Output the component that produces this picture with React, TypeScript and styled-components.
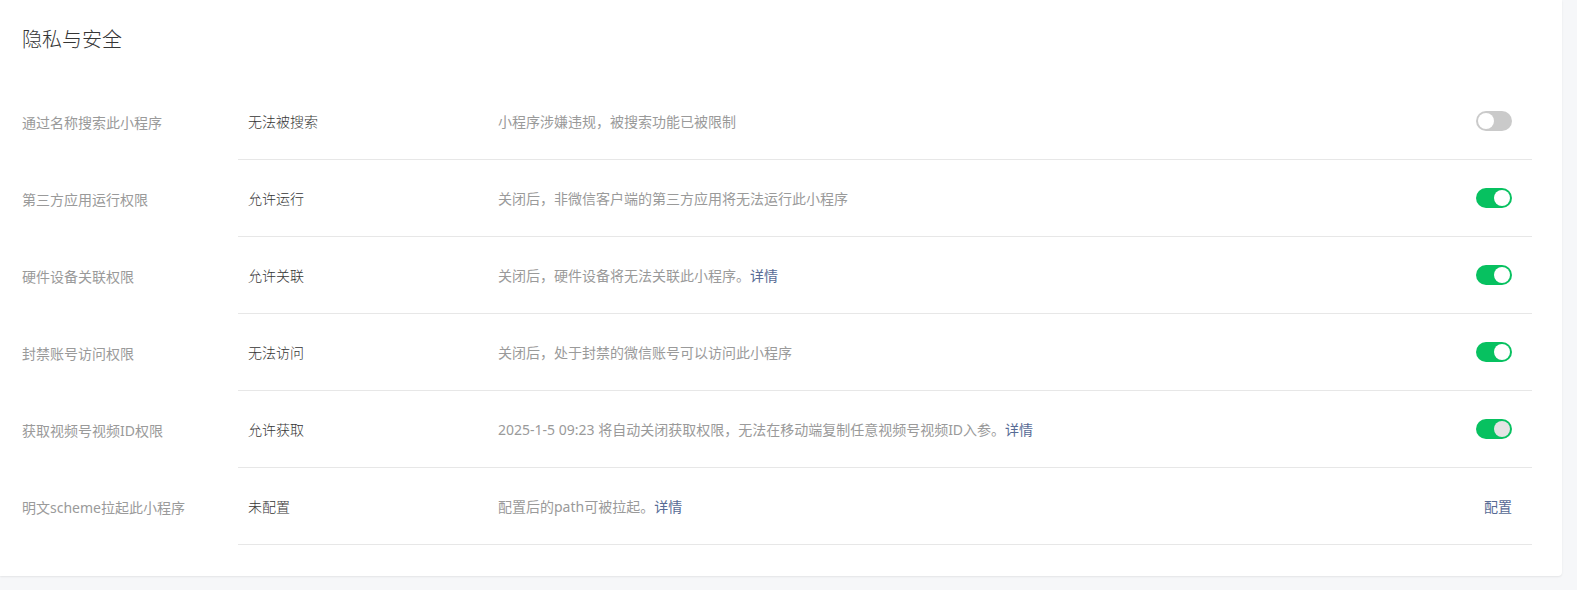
import React from 'react';
import styled, { createGlobalStyle } from 'styled-components';

const GlobalStyle = createGlobalStyle`
  html, body {
    margin: 0;
    padding: 0;
    background: #f6f7f9;
    font-family: "Noto Sans", "Noto Sans CJK SC", sans-serif;
  }
`;

const Page = styled.div`
  min-height: 590px;
  padding-right: 15px;
  box-sizing: border-box;
`;

const Card = styled.section`
  background: #fff;
  border-radius: 0 0 4px 0;
  box-shadow: 0 1px 2px rgba(0, 0, 0, 0.08);
  padding: 26px 30px 31px 22px;
`;

const Title = styled.h2`
  margin: 0 0 29px 0;
  font-size: 20px;
  line-height: 28px;
  font-weight: 300;
  color: #353535;
`;

const Row = styled.div`
  display: flex;
  height: 77px;
`;

const Label = styled.div`
  width: 216px;
  flex: none;
  display: flex;
  align-items: center;
  font-size: 14px;
  color: #9a9a9a;
`;

const Content = styled.div`
  flex: 1;
  display: flex;
  align-items: center;
  border-bottom: 1px solid #e7e7e7;
`;

const Value = styled.div`
  width: 260px;
  flex: none;
  padding-left: 10px;
  box-sizing: border-box;
  font-size: 14px;
  font-weight: 300;
  color: #353535;
`;

const Desc = styled.div`
  flex: 1;
  font-size: 14px;
  color: #9a9a9a;
`;

const Link = styled.a`
  color: #576b95;
  text-decoration: none;
  cursor: pointer;
`;

const Action = styled.div`
  padding-right: 20px;
  display: flex;
  align-items: center;
  font-size: 14px;
`;

const Switch = styled.span<{ $on: boolean; $dim?: boolean }>`
  position: relative;
  display: inline-block;
  width: 36px;
  height: 20px;
  border-radius: 10px;
  background: ${p => (p.$on ? '#07c160' : '#cacaca')};

  &::after {
    content: '';
    position: absolute;
    top: 2px;
    left: ${p => (p.$on ? '18px' : '2px')};
    width: 16px;
    height: 16px;
    border-radius: 50%;
    background: ${p => (p.$dim ? '#e4e4e4' : '#fff')};
  }
`;

interface Setting {
  label: string;
  value: string;
  desc: React.ReactNode;
  action: React.ReactNode;
}

const settings: Setting[] = [
  {
    label: '通过名称搜索此小程序',
    value: '无法被搜索',
    desc: '小程序涉嫌违规，被搜索功能已被限制',
    action: <Switch $on={false} />
  },
  {
    label: '第三方应用运行权限',
    value: '允许运行',
    desc: '关闭后，非微信客户端的第三方应用将无法运行此小程序',
    action: <Switch $on />
  },
  {
    label: '硬件设备关联权限',
    value: '允许关联',
    desc: (
      <>
        关闭后，硬件设备将无法关联此小程序。<Link>详情</Link>
      </>
    ),
    action: <Switch $on />
  },
  {
    label: '封禁账号访问权限',
    value: '无法访问',
    desc: '关闭后，处于封禁的微信账号可以访问此小程序',
    action: <Switch $on />
  },
  {
    label: '获取视频号视频ID权限',
    value: '允许获取',
    desc: (
      <>
        2025-1-5 09:23 将自动关闭获取权限，无法在移动端复制任意视频号视频ID入参。<Link>详情</Link>
      </>
    ),
    action: <Switch $on $dim />
  },
  {
    label: '明文scheme拉起此小程序',
    value: '未配置',
    desc: (
      <>
        配置后的path可被拉起。<Link>详情</Link>
      </>
    ),
    action: <Link>配置</Link>
  }
];

const App: React.FC = () => (
  <Page>
    <GlobalStyle />
    <Card>
      <Title>隐私与安全</Title>
      {settings.map(s => (
        <Row key={s.label}>
          <Label>{s.label}</Label>
          <Content>
            <Value>{s.value}</Value>
            <Desc>{s.desc}</Desc>
            <Action>{s.action}</Action>
          </Content>
        </Row>
      ))}
    </Card>
  </Page>
);

export default App;
